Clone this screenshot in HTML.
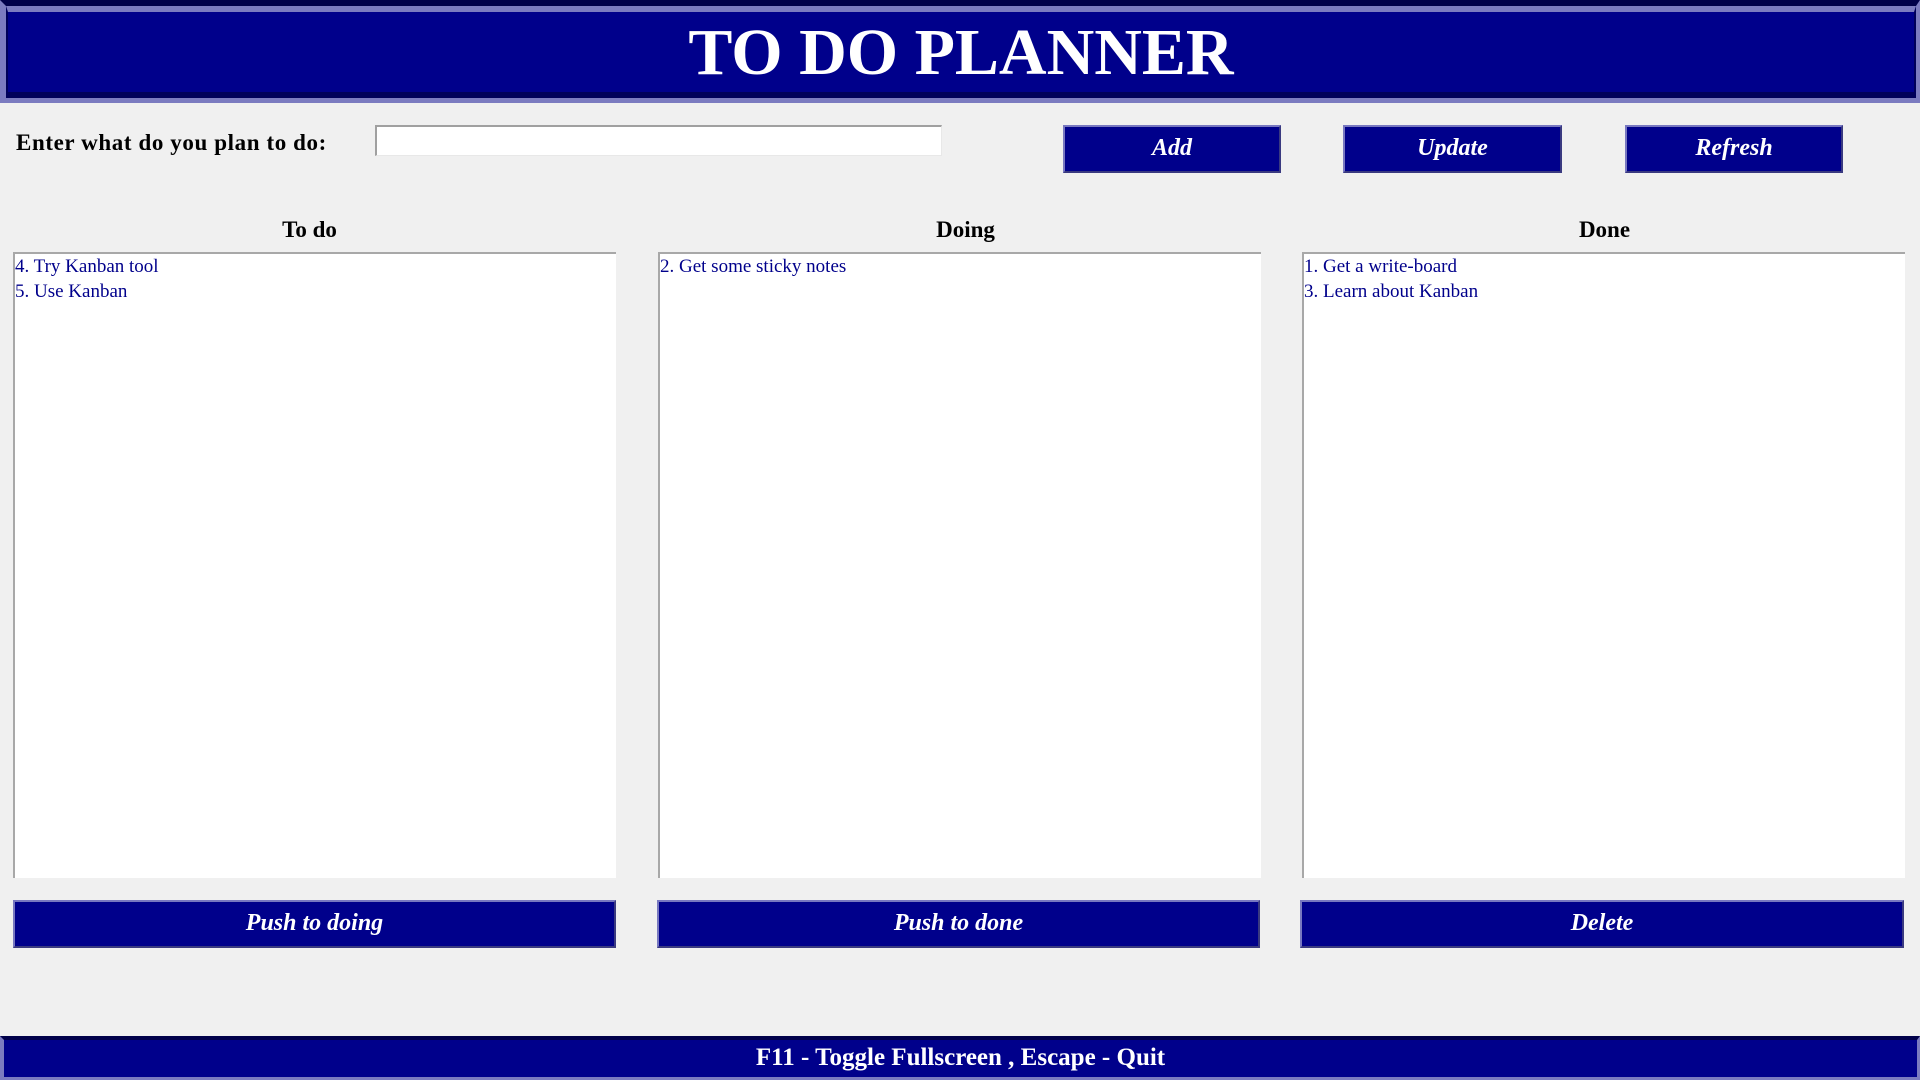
<!DOCTYPE html>
<html><head><meta charset="utf-8"><style>
*{margin:0;padding:0;box-sizing:border-box}
body{width:1920px;height:1080px;background:#f0f0f0;position:relative;overflow:hidden;font-family:"Liberation Serif",serif}
.hdr{position:absolute;left:0;top:0;width:1920px;height:103px;background:#00008b;border-top:6px solid #00004a;border-left:6px solid #7b7bc0;border-bottom:5px solid #7b7bc0;border-right:4px solid #7b7bc0}
.hdr .in{position:absolute;left:0;top:0;right:0;bottom:0;border-top:6px solid #7b7bc0;border-bottom:6px solid #00005a;border-left:2px solid #00005a;border-right:2px solid #00005a}
.hdr h1{position:absolute;left:0;right:0;top:7px;text-align:center;color:#fff;font-size:66px;font-weight:bold;line-height:80px}
.lbl{position:absolute;left:16px;top:130px;font-size:23px;letter-spacing:0.6px;font-weight:bold;color:#000}
.inp{position:absolute;left:375px;top:125px;width:567px;height:31px;background:#fff;border-top:2px solid #a0a0a0;border-left:2px solid #a0a0a0;border-right:1px solid #e8e8e8;border-bottom:1px solid #e8e8e8}
.btn{position:absolute;background:#00008b;color:#fff;font-style:italic;font-weight:bold;font-size:24px;text-align:center;border-top:2px solid #7878c0;border-left:2px solid #7878c0;border-right:2px solid #3a3a80;border-bottom:2px solid #3a3a80}
.ch{position:absolute;top:217px;font-size:23px;font-weight:bold;text-align:center;width:603px}
.list{position:absolute;top:252px;width:603px;height:626px;background:#fff;border-top:2px solid #a8a8a8;border-left:2px solid #a8a8a8;font-size:19px;color:#00008b;line-height:25px}
.ft{position:absolute;left:0;top:1036px;width:1920px;height:44px;background:#00008b;border-top:4px solid #00004a;border-left:4px solid #7b7bc0;border-bottom:3px solid #7b7bc0;border-right:3px solid #7b7bc0;color:#fff;font-weight:bold;font-size:25px;text-align:center;line-height:36px}
</style></head><body>
<div class="hdr"><div class="in"></div><h1>TO DO PLANNER</h1></div>
<div class="lbl">Enter what do you plan to do:</div>
<div class="inp"></div>
<div class="btn" style="left:1063px;top:125px;width:218px;height:48px;line-height:43px">Add</div>
<div class="btn" style="left:1343px;top:125px;width:219px;height:48px;line-height:43px">Update</div>
<div class="btn" style="left:1625px;top:125px;width:218px;height:48px;line-height:43px">Refresh</div>
<div class="ch" style="left:8px">To do</div>
<div class="ch" style="left:664px">Doing</div>
<div class="ch" style="left:1303px">Done</div>
<div class="list" style="left:13px"><div>4. Try Kanban tool</div><div>5. Use Kanban</div></div>
<div class="list" style="left:658px"><div>2. Get some sticky notes</div></div>
<div class="list" style="left:1302px"><div>1. Get a write-board</div><div>3. Learn about Kanban</div></div>
<div class="btn" style="left:13px;top:900px;width:603px;height:48px;line-height:43px">Push to doing</div>
<div class="btn" style="left:657px;top:900px;width:603px;height:48px;line-height:43px">Push to done</div>
<div class="btn" style="left:1300px;top:900px;width:604px;height:48px;line-height:43px">Delete</div>
<div class="ft">F11 - Toggle Fullscreen , Escape - Quit</div>
</body></html>
